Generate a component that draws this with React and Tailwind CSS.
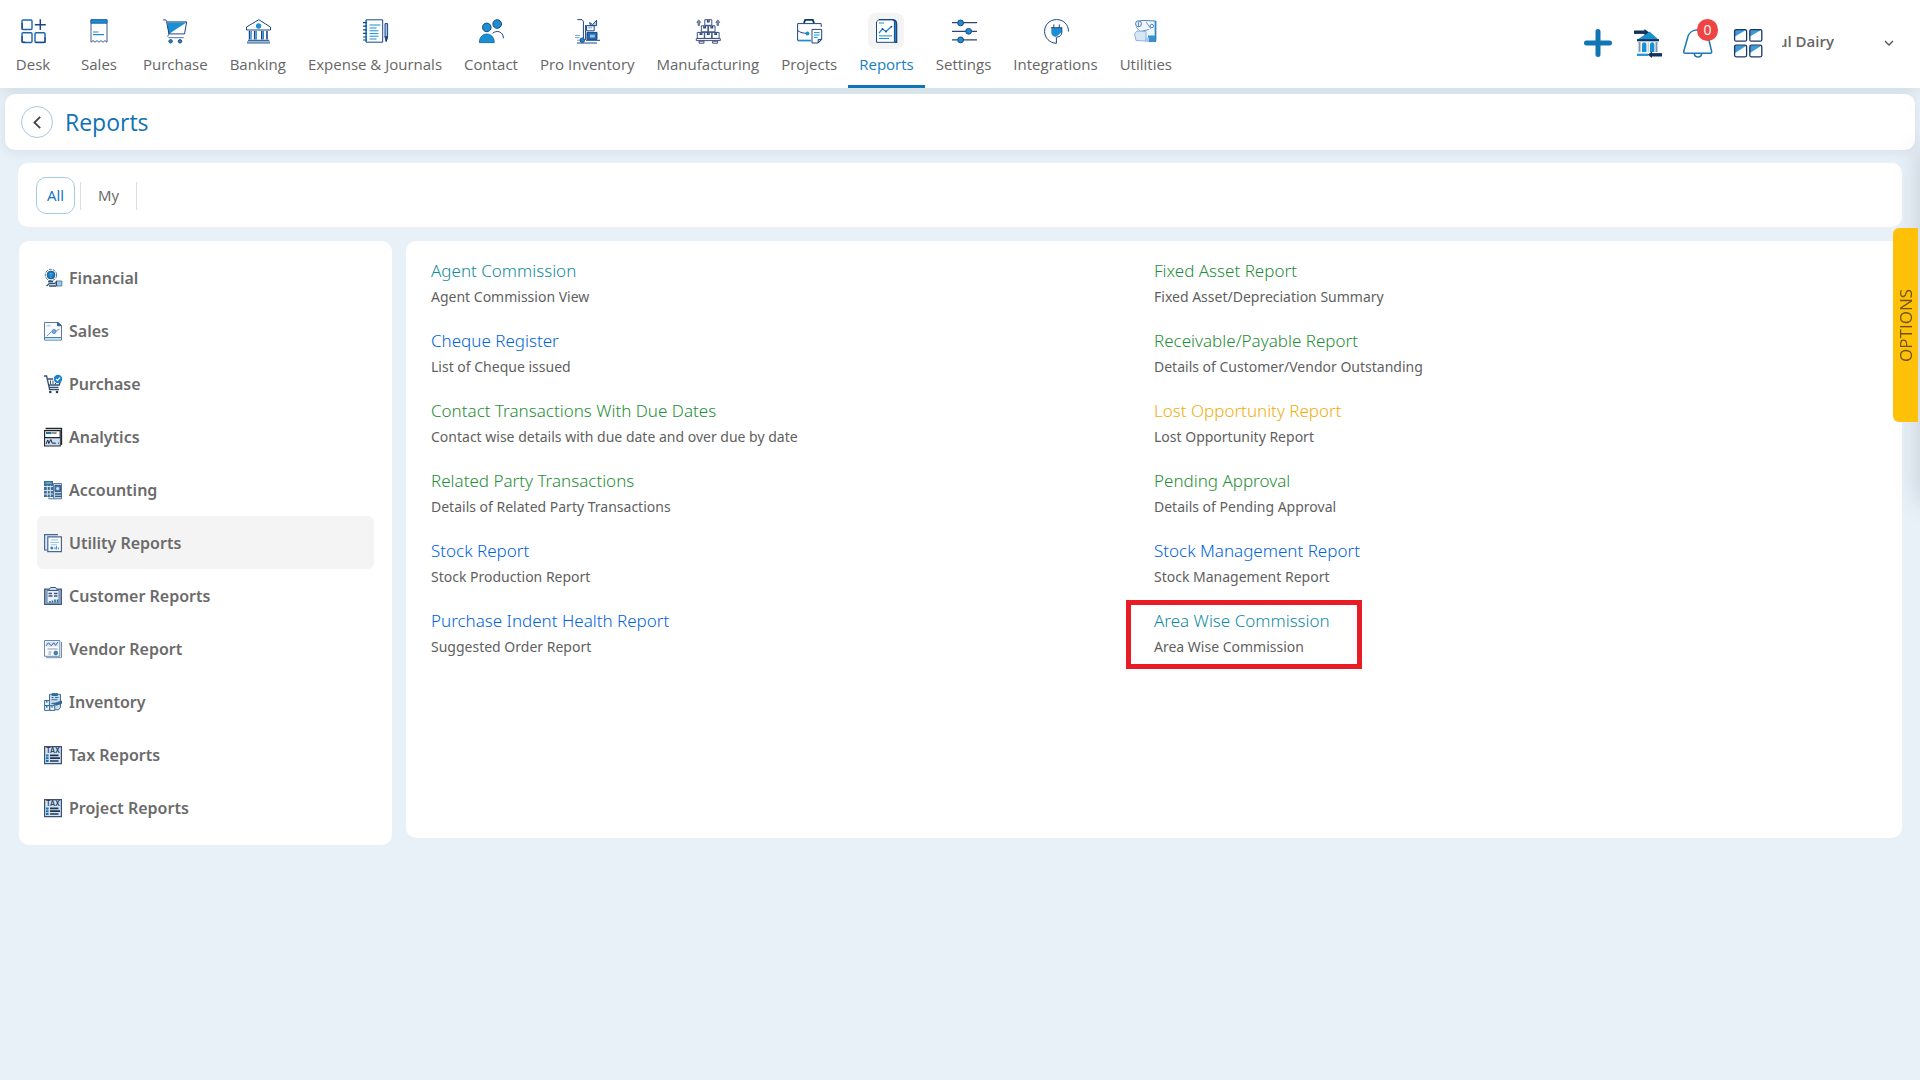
import React from "react";

const NAVY = "#1c4587";
const BLUE = "#1b8fd0";
const SLATE = "#3d5f8c";

/* ---------- top menu icons (24 x 24) ---------- */

const NavSvg = ({ children }) => (
  <svg
    viewBox="0 0 24 24"
    className="w-6 h-6 overflow-visible"
    fill="none"
    stroke={NAVY}
    strokeWidth="1"
    aria-hidden="true"
  >
    {children}
  </svg>
);

const DeskIcon = () => (
  <NavSvg>
    <g stroke="#1d66ad" strokeWidth="1.4">
      <rect x="1" y="1" width="10" height="9.5" rx="1" />
      <rect x="1" y="13.7" width="10" height="9.8" rx="1" />
      <rect x="14" y="13.7" width="10" height="9.8" rx="1" />
    </g>
    <path d="M19.3 .3v10.8M13.8 5.7h11" strokeWidth="1.5" />
    <path d="M1.2 4v6.3M1.2 17v6h3M14.5 23.4H24V18" strokeWidth="1.2" />
  </NavSvg>
);

const SalesIcon = () => (
  <NavSvg>
    <path
      d="M4 .8h16v22.4l-2-1.6-2 1.6-2-1.6-2 1.6-2-1.6-2 1.6-2-1.6-2 1.6Z"
      stroke="#3d5f9c"
    />
    <path d="M4 .8h16v3.4H4Z" fill={BLUE} stroke="#1d66ad" />
    <path d="M6 13h5.5M6 15.6h11" stroke={BLUE} strokeWidth="1.2" />
  </NavSvg>
);

const CartIcon = () => (
  <NavSvg>
    <path d="M4.3 3.6h19.2L12.5 10.5 5.4 15.6Z" fill={BLUE} stroke="none" />
    <path d="M.2.9h2.6l1.2 2h19.7l-2.2 12H6L3.6 3" />
    <path d="M6 15l-1.3 2.3 1.3 1.4h14.8" stroke="#5b6f9f" />
    <circle cx="7.6" cy="22.3" r="1.7" fill={BLUE} />
    <circle cx="17" cy="22.3" r="1.7" fill={BLUE} />
  </NavSvg>
);

const BankIcon = () => (
  <NavSvg>
    <path d="M.5 8 12.8.7 24.5 8v3H.5Z" strokeLinejoin="round" />
    <circle cx="12.6" cy="7" r="2.3" fill={BLUE} stroke={BLUE} />
    <path d="M3.6 12v8.5M8.7 12v8.5M15.8 12v8.5M21 12v8.5" strokeWidth="1.6" />
    <path d="M5.2 12v8.5M10.3 12v8.5M17.4 12v8.5" stroke={BLUE} strokeWidth="1.2" />
    <path d="M2 21.3h21.3M1 23.9h23" stroke={SLATE} strokeWidth="1.3" />
    <path d="M1 22.6h23" stroke="#8dbde4" strokeWidth="1.4" />
  </NavSvg>
);

const JournalIcon = () => (
  <NavSvg>
    <path d="M3 .8h16.7v22.4H3Z" />
    <path d="M3.3 1v22" stroke={BLUE} strokeWidth="1.5" />
    <path d="M0 3.6h4M0 7.2h4M0 10.8h4M0 14.4h4M0 18h4M0 21h4" strokeWidth="1.2" />
    <path d="M6.5 6h11M6.5 9h7M6.5 11.8h9M6.5 14.6h9M6.5 17.2h9M6.5 20h7" stroke={BLUE} />
    <path d="M22 4.6h2.6v13l-1.4 4.6L22 17.6Z" fill="#9cc5e6" />
    <path d="M22 17.6h2.6l-1.4 5Z" fill={NAVY} />
  </NavSvg>
);

const ContactIcon = () => (
  <NavSvg>
    <circle cx="7.8" cy="8.4" r="4.3" fill={BLUE} />
    <circle cx="18.2" cy="5" r="4.3" fill={BLUE} />
    <path d="M.4 23.6c0-11.4 14.8-11.4 14.8 0Z" fill={BLUE} stroke="#1a6fb0" />
    <path d="M13.6 14.4c3.5-3.6 10.8-2.2 10.8 4.9" />
  </NavSvg>
);

const ProInventoryIcon = () => (
  <NavSvg>
    <path d="M2.3.6H7l1.4 1.6V19M11 21.3h14M2 24h20" />
    <path d="M0 16.4h5M0 18.6h4.5M2 21.2h3" stroke="#6fa5d3" />
    <circle cx="7.3" cy="21.2" r="2.2" fill={BLUE} />
    <path d="M12 13.4h10v7H12Z" fill="#1f6fb5" />
    <path d="M11.6 6.6h7.6v5.2h-7.6Z" fill="#fff" />
    <path d="M13.2 7.6h4v2h-4zM15 15.8h4.8v2.6H15Z" fill="#8dc6ea" stroke="none" />
    <path d="M14.6 3.6l3 2 4-4.4v5.4h-6Z" fill="#a9d3ee" />
    <path d="M10.6 6v15" />
  </NavSvg>
);

const ManufacturingIcon = () => (
  <NavSvg>
    <g stroke="#40527d">
      <path d="M8.8.7h7v5.6h-7zM5.3 6.8h6.6v6H5.3zM12.4 6.8H19v6h-6.6zM1.3 13.4h7v6h-7zM8.7 13.4h7v6h-7zM16.1 13.4h7v6h-7z" />
      <path d="M.3 19.6h24v2H.3zM3 22.2h5v2H3zM16.6 22.2h5v2h-5z" />
    </g>
    <path
      d="M11.5 1v1.8h1.6V1M7.8 7v1.8h1.6V7M15 7v1.8h1.6V7M4.2 13.6v1.8h1.6v-1.8M11.5 13.6v1.8h1.6v-1.8M18.9 13.6v1.8h1.6v-1.8"
      strokeWidth="1.2"
    />
    <path
      d="M2.8.8.8 3.4h1.2v3h1.6v-3h1.2ZM21.8.8l-2 2.6H21v3h1.6v-3h1.2Z"
      fill="#8b97b3"
      stroke="#40527d"
      strokeWidth=".7"
    />
  </NavSvg>
);

const ProjectsIcon = () => (
  <NavSvg>
    <path d="M7 4 8.2.9h7.6L17 4" stroke="#123a6e" strokeWidth="1.9" />
    <path d="M24.2 8V4.6H.6v16.8H14M.6 11.6c3 2 6 2.8 9.3 2.8" />
    <path d="M1 21.6h13" stroke={BLUE} strokeWidth="1.6" />
    <circle cx="10.4" cy="14.4" r="2" fill={BLUE} stroke="none" />
    <path d="M15 10.4h9.7v10L21.2 24H15Z" fill="#fff" />
    <path d="M17 13.6h5.6M17 16h5.6M17 18.4h3.6" stroke={BLUE} />
    <path d="M24.6 20.4h-3.4V24Z" fill="#8dbde4" />
  </NavSvg>
);

const ReportsIcon = () => (
  <NavSvg>
    <path d="M5 .8h13c3.400 0 4.600 1.600 4.600 4.400v18h-2" fill={BLUE} strokeWidth="1.4" />
    <path d="M2.5 2.8 4.7.9h13c1.8 0 2.7.8 2.7 3v19.400H2.5Z" fill="#fff" />
    <path d="M5 4h5M5 16.9h13M5 19.5h10" stroke={BLUE} />
    <path d="m5 14 3.5-4 3.5 2.5 5.5-5" stroke="#1d7fc4" strokeWidth="1.2" />
    <circle cx="8.5" cy="10" r=".9" fill={NAVY} stroke="none" />
    <circle cx="12" cy="12.5" r=".9" fill={NAVY} stroke="none" />
    <circle cx="17.5" cy="7.6" r=".9" fill={NAVY} stroke="none" />
  </NavSvg>
);

const SettingsIcon = () => (
  <NavSvg>
    <path d="M0 3.7h25M0 12.3h25M0 20.9h25" stroke="#2e4677" strokeWidth="1.2" />
    <circle cx="8.6" cy="3.9" r="2.9" fill={BLUE} />
    <circle cx="16.6" cy="12.3" r="2.9" fill={BLUE} />
    <circle cx="8.6" cy="20.9" r="2.9" fill={BLUE} />
  </NavSvg>
);

const IntegrationsIcon = () => (
  <NavSvg>
    <path d="M24.5 12.5C24.5 5 19 .6 12.6.6 5.5.6.6 6 .6 12.4S5.5 24 12.4 24.3v-6" />
    <path d="M7.3 9h10.5v4.3l-6 4.7c-2.7-.3-4.5-2-4.5-4.4Z" fill={BLUE} stroke="none" />
    <path d="M9.8 9V5.4M15.3 9V5.4M6.8 8.7h11.4M17.8 9v4.5c0 2.5-2 4.6-5 4.6" />
  </NavSvg>
);

const UtilitiesIcon = () => (
  <NavSvg>
    <g stroke="#5480b4">
      <path d="M3 2.5 9 1.4 21.8 2v19.5H12" fill="#eef5fc" />
      <path d="M21.4 2v21" stroke="#2a8ac8" strokeWidth="1.5" />
      <circle cx="4.5" cy="4.8" r="3" fill="#dcebf8" />
      <path d="M4.5 2.5V8M2 8l4 4.5 9-2M12 3l5 7" strokeWidth=".8" />
      <circle cx="17.8" cy="7" r="1.7" fill="#fff" />
      <path d="M.5 14.5 3 12l9 .5v9.5l-10-.5Z" fill="#d5e6f6" stroke="#8fb3d9" />
      <path d="M14 16.5h7v6.5h-7Z" fill="#3791cd" stroke="none" />
      <path d="M11 18.5h4V23h-4Z" fill="#a8c8e6" stroke="none" />
    </g>
  </NavSvg>
);

const menu = [
  { label: "Desk", Icon: DeskIcon },
  { label: "Sales", Icon: SalesIcon },
  { label: "Purchase", Icon: CartIcon },
  { label: "Banking", Icon: BankIcon },
  { label: "Expense & Journals", Icon: JournalIcon },
  { label: "Contact", Icon: ContactIcon },
  { label: "Pro Inventory", Icon: ProInventoryIcon },
  { label: "Manufacturing", Icon: ManufacturingIcon },
  { label: "Projects", Icon: ProjectsIcon },
  { label: "Reports", Icon: ReportsIcon, active: true },
  { label: "Settings", Icon: SettingsIcon },
  { label: "Integrations", Icon: IntegrationsIcon },
  { label: "Utilities", Icon: UtilitiesIcon },
];

/* ---------- sidebar icons (18 x 18) ---------- */

const SideSvg = ({ children }) => (
  <svg
    viewBox="0 0 18 18"
    className="w-[18px] h-[18px] shrink-0 overflow-visible"
    fill="none"
    stroke={SLATE}
    strokeWidth="1"
    aria-hidden="true"
  >
    {children}
  </svg>
);

const FinancialIcon = () => (
  <SideSvg>
    <circle cx="7" cy="6" r="5.7" stroke="#4b6f96" strokeDasharray="3 1" />
    <circle cx="7" cy="6" r="3.9" fill="#1679bd" stroke="#1d5f98" />
    <path d="M5.6 4.5h2.8M5.6 6h2.8M6 7.5l1.5 1" stroke="#6cc0ee" strokeWidth=".7" />
    <path d="M4 12.5h5M2.5 17l3-2.5h5l2-1.5M5 17h7" stroke="#31506f" strokeWidth="1.3" />
    <path d="M12 12h5.8v5H12Z" fill="#9cc9ea" stroke="#5f7fa5" />
    <path d="M12.5 12v5" stroke="#31506f" />
  </SideSvg>
);

const SalesReportIcon = () => (
  <SideSvg>
    <path d="M.5.5h13.8l3.2 3v14.6H.5Z" fill="#f8fbff" stroke="#5b7ba6" />
    <path d="M13.5.5v3.2h4Z" fill={SLATE} />
    <path d="M2.5 3.8h4" stroke="#7d9cc4" strokeDasharray="1 .6" />
    <path d="m3 14 4.5-4.5 2 1 6-3.5" stroke="#6d9bd0" />
    <circle cx="10" cy="9.5" r="2" fill="#7ba9d8" stroke="#5b8cc4" />
    <path d="M1 15.5h16" stroke="#5b7ba6" />
    <path d="M1 17h16" stroke="#a6dcf5" strokeWidth="1.5" />
  </SideSvg>
);

const PurchaseIcon = () => (
  <SideSvg>
    <path
      d="M0 1h2.6l2.6 11.5h9.3M3.3 4H9M3.9 7l.8 3h10.6l.8-3M5.2 12.5l.3 2.2h9.5"
      stroke="#35506f"
      strokeWidth="1.3"
    />
    <path d="M6.5 5.5v3.5M9 5.5v3.5M11.5 8v1.5" stroke="#35506f" />
    <circle cx="6.3" cy="17" r="1.3" fill="#243d60" stroke="none" />
    <circle cx="13" cy="17" r="1.3" fill="#243d60" stroke="none" />
    <circle cx="14" cy="4" r="4.2" fill="#1583cb" stroke="none" />
    <path d="m12 4 1.5 1.5 2.7-3" stroke="#fff" strokeWidth="1.2" />
  </SideSvg>
);

const AnalyticsIcon = () => (
  <SideSvg>
    <path d="M1.5.5h16v16.5" stroke="#23262e" strokeWidth="1.3" />
    <path d="M.6 2.6h15.6v15.3H.6Z" fill="#fff" stroke="#23262e" strokeWidth="1.2" />
    <path d="M1.2 10h14.5v7.3H1.2Z" fill="#c9dcf8" stroke="none" />
    <path d="M2 5h5.5" stroke="#1d6f96" strokeWidth="2" />
    <path d="M8 5h4.5M1 9.7h15" stroke="#23262e" strokeWidth="1.2" />
    <path d="m2 16 1.8-4 1 3.5 2-4 1.5 3.7h3.5M14 15.2h1" stroke="#23262e" />
  </SideSvg>
);

const AccountingIcon = () => (
  <SideSvg>
    <path d="M0 0h9v16H0Z" fill="#3d6d92" stroke="none" />
    <path d="M1.5 2h6" stroke="#67b4dc" strokeWidth="1.5" />
    <path d="M0 5.5h9M0 9.5h9M0 13h9M3.3 4.5v11M6.3 4.5v11" stroke="#e6f0fa" strokeWidth=".9" />
    <path d="M4.8 16.5v1.3h12.7V2.5H9.5v15" fill="#bdd5ee" stroke="#5b7ba0" />
    <path d="M11 4.5h5.5v6H11Z" fill="#4f81ae" stroke="#35597c" />
    <circle cx="13.7" cy="7.4" r="1.5" fill="#cfe3f7" stroke="none" />
    <path d="M11 13h6.5M11 15.4h6.5" stroke="#35597c" strokeWidth="1.3" />
  </SideSvg>
);

const UtilityIcon = () => (
  <SideSvg>
    <path d="M14 .6H.6v15.4h3" fill="#dceafa" stroke="#4a6591" strokeWidth="1.2" />
    <path d="M3.8 2.9h13.6v14.7H3.8Z" fill="#fff" stroke="#4a6591" strokeWidth="1.2" />
    <path d="M7 6h7M6 8.4h9M7 10.8h6" stroke="#8cc3e6" />
    <circle cx="7.8" cy="14" r="1.5" fill={BLUE} stroke="none" />
    <path d="M11 15.5v-2.5M12.6 15.5v-3.5M14.4 15.5v-2" stroke="#4a86c0" />
  </SideSvg>
);

const CustomerIcon = () => (
  <SideSvg>
    <path d="M.7 2.2h16.6v15.2H.7Z" fill="#a9bfdc" stroke="#3c5680" strokeWidth="1.3" />
    <path d="M3 3.5h12v12.5H3Z" fill="#e8f1fb" stroke="#5b7ba0" />
    <path d="M5 2.5 6.5.5h5L13 2.5v1H5Z" fill="#cfdcee" stroke="#3c5680" />
    <path d="M4.5 6.5H8M10 6.5h3.5M4.5 9h4M10 9h3.5" stroke="#3c5680" strokeWidth="1.3" />
    <path d="M6 15.5v-1.5M8.5 15.5v-2M11 15.5v-3M13.5 15.5v-3" stroke="#26648f" strokeWidth="1.5" />
  </SideSvg>
);

const VendorIcon = () => (
  <SideSvg>
    <path d="M17.5 2v15.7H2" stroke="#7290a8" />
    <path d="M.5.5h15.3v15.8H.5Z" fill="#fbfdff" stroke="#6d8aae" />
    <path d="M1.8 1.5h12.4v5H1.8Z" fill="#d3e2fa" stroke="none" />
    <path d="m2 5.8 2.5-3 2.7 3 2.5-3 1.8 2.5 2.7-3.5" stroke="#4a6591" />
    <path d="M3.5 9h10M4.5 12h3M4.5 14h2.5" stroke="#8c99a8" />
    <circle cx="11.8" cy="13" r="2" fill="#2a84bd" stroke="#4a6591" strokeWidth=".6" />
  </SideSvg>
);

const InventoryIcon = () => (
  <SideSvg>
    <path d="M5.5 1.3h11v13l-2 2.5H5.5Z" fill="#c8daee" stroke="#4a6e96" />
    <path d="M8 .7h5.5v1.8H8Z" fill="#2a6c98" stroke="#2a6c98" />
    <path d="M7.5 4.5h2M11 4.5h3.5M7.5 6.7h6" stroke="#3c6a92" />
    <path d="M.6 7.5h4.8v5H.6zM.6 12.6h5v4.8H.6zM5.7 12.6h5v4.8h-5z" fill="#f0f6fd" stroke="#3c6a92" />
    <path d="M2 8h1.5v1.7H2zM2 13h1.5v1.7H2zM7.3 13h1.5v1.7H7.3z" fill="#2a84bd" stroke="none" />
    <path d="m7.5 10.5 4.5-.5 5.5-2v2.5l-6 1.8" fill="#2d6a94" stroke="#2d6a94" />
  </SideSvg>
);

const TaxIcon = () => (
  <SideSvg>
    <path d="M.6.6h16.8v17H.6Z" fill="#d2e4f8" stroke="#3a4f73" strokeWidth="1.2" />
    <text
      x="9"
      y="6.6"
      textAnchor="middle"
      fill="#26364f"
      stroke="none"
      fontFamily="Inter, sans-serif"
      fontSize="7"
      fontWeight="600"
    >
      TAX
    </text>
    <path d="M2 9.4h2.6M2 12.2h2.6M2 15h2.6" stroke="#1f6f9f" strokeWidth="2" />
    <path d="M6 9.4h8.5M6 12.2h10M6 15h8.5" stroke="#24344f" strokeWidth="1.7" />
  </SideSvg>
);

const categories = [
  { label: "Financial", Icon: FinancialIcon },
  { label: "Sales", Icon: SalesReportIcon },
  { label: "Purchase", Icon: PurchaseIcon },
  { label: "Analytics", Icon: AnalyticsIcon },
  { label: "Accounting", Icon: AccountingIcon },
  { label: "Utility Reports", Icon: UtilityIcon, active: true },
  { label: "Customer Reports", Icon: CustomerIcon },
  { label: "Vendor Report", Icon: VendorIcon },
  { label: "Inventory", Icon: InventoryIcon },
  { label: "Tax Reports", Icon: TaxIcon },
  { label: "Project Reports", Icon: TaxIcon },
];

const TEAL = "text-[#0f8ba1]";
const GREEN = "text-[#1f8e38]";
const LINK = "text-[#0064dc]";
const AMBER = "text-[#f0ae0c]";

const reports = [
  { title: "Agent Commission", text: "Agent Commission View", color: TEAL },
  { title: "Fixed Asset Report", text: "Fixed Asset/Depreciation Summary", color: GREEN },
  { title: "Cheque Register", text: "List of Cheque issued", color: LINK },
  { title: "Receivable/Payable Report", text: "Details of Customer/Vendor Outstanding", color: GREEN },
  { title: "Contact Transactions With Due Dates", text: "Contact wise details with due date and over due by date", color: GREEN },
  { title: "Lost Opportunity Report", text: "Lost Opportunity Report", color: AMBER },
  { title: "Related Party Transactions", text: "Details of Related Party Transactions", color: GREEN },
  { title: "Pending Approval", text: "Details of Pending Approval", color: GREEN },
  { title: "Stock Report", text: "Stock Production Report", color: LINK },
  { title: "Stock Management Report", text: "Stock Management Report", color: LINK },
  { title: "Purchase Indent Health Report", text: "Suggested Order Report", color: LINK },
  { title: "Area Wise Commission", text: "Area Wise Commission", color: TEAL, marked: true },
];

const Header = () => (
  <header className="flex items-start justify-between h-22 bg-white shadow-[0_0_14px_rgba(60,80,60,0.16)]">
    <nav className="flex">
      {menu.map(({ label, Icon, active }) => (
        <a
          key={label}
          href="#"
          className={`flex flex-col items-center h-22 min-w-[66px] px-[11px] pt-[13px] border-b-3 whitespace-nowrap ${
            active ? "border-[#0f75b5] text-[#1480c4]" : "border-transparent text-[#666]"
          }`}
        >
          <span
            className={`flex items-center justify-center w-9 h-9 rounded-lg ${active ? "bg-[#f4f4f4]" : ""}`}
          >
            <Icon />
          </span>
          <span className="mt-[5px] text-[15px] leading-5">{label}</span>
        </a>
      ))}
    </nav>

    <div className="flex items-center gap-[22px] pt-[29px] pr-[26px]">
      <button type="button" aria-label="Add" className="cursor-pointer">
        <svg viewBox="0 0 28 28" className="w-7 h-7" stroke="#0f75b5" strokeWidth="5" strokeLinecap="round">
          <path d="M14 2.5v23M2.5 14h23" />
        </svg>
      </button>

      <button type="button" aria-label="Bank transfer" className="cursor-pointer">
        <svg viewBox="0 0 28 28" className="w-7 h-7 overflow-visible" fill="none">
          <path d="M3.5 10.5 15.5 2.5l9 8Z" fill={BLUE} />
          <path d="M3 11.2h22" stroke="#10325f" strokeWidth="2.2" />
          <path d="M0 3.2h11" stroke="#10325f" strokeWidth="3.4" />
          <path d="m10.5 0 4.3 3.2-4.3 3.2Z" fill="#10325f" />
          <path d="M5.5 13v10M22.5 13v10" stroke="#7d9bbd" strokeWidth="2" />
          <path
            d="M8 23v-7.5a2.2 2.2 0 0 1 4.4 0V23ZM16 23v-7.5a2.2 2.2 0 0 1 4.4 0V23Z"
            fill={BLUE}
          />
          <path d="M14.2 13v10" stroke="#a9c8e4" strokeWidth="1.2" />
          <path d="M3 25.8h11" stroke="#2a9bd8" strokeWidth="2.4" />
          <path d="M17 25.8h11" stroke="#10325f" strokeWidth="3.4" />
          <path d="m18 22.6-4.3 3.2L18 29Z" fill="#10325f" />
        </svg>
      </button>

      <button type="button" aria-label="Notifications" className="relative cursor-pointer">
        <svg viewBox="0 0 28 28" className="w-7 h-7 overflow-visible" fill="none" stroke="#1a78b8" strokeWidth="1.5">
          <path d="M14 .8C8 .8 4.2 4.5 3.4 9.5L-.2 22.3c-.3 1.2.2 1.9 1.4 1.9h25c1.2 0 1.7-.7 1.4-1.9L24.6 9.5C23.8 4.5 20 .8 14 .8Z" />
          <path d="M10.3 24.4c.3 4.8 7.1 4.8 7.4 0" />
        </svg>
        <span className="absolute -top-[10px] -right-[6px] flex items-center justify-center w-[21px] h-[22px] rounded-full bg-[#ee4444] text-white text-[14px] leading-none">
          0
        </span>
      </button>

      <button type="button" aria-label="Apps" className="cursor-pointer">
        <svg viewBox="0 0 28 28" className="w-7 h-7 overflow-visible" stroke="#173869" strokeWidth="1.3" fill="none">
          <path d="M1 1h11L1 7.5ZM16 1h11l-11 6.5ZM1 17h11L1 24ZM16 17h11l-11 7Z" fill="#3e9ad6" stroke="none" />
          <rect x=".6" y=".6" width="12" height="11.6" rx="1.5" />
          <rect x="15.8" y=".6" width="12" height="11.6" rx="1.5" />
          <rect x=".6" y="16.2" width="12" height="11.6" rx="1.5" />
          <rect x="15.8" y="16.2" width="12" height="11.6" rx="1.5" />
        </svg>
      </button>

      <button type="button" className="flex items-center justify-between w-[112px] -ml-0.5 cursor-pointer">
        <span className="flex justify-end w-[52px] pb-1 overflow-hidden whitespace-nowrap text-[15px] leading-5 font-semibold text-[#666]">
          ul Dairy
        </span>
        <svg viewBox="0 0 10 6" className="w-[10px] h-[6px]" fill="none" stroke="#555" strokeWidth="1.3">
          <path d="m1 1 4 4 4-4" />
        </svg>
      </button>
    </div>
  </header>
);

const TitleBar = () => (
  <div className="flex items-center gap-3 h-14 mt-1.5 mx-[5px] pl-4 rounded-[10px] bg-white shadow-[0_2px_12px_rgba(60,80,90,0.1)]">
    <button
      type="button"
      aria-label="Back"
      className="flex items-center justify-center w-8 h-8 rounded-full border border-[#a9c8e0] cursor-pointer"
    >
      <svg viewBox="0 0 8 13" className="w-2 h-[13px]" fill="none" stroke="#444" strokeWidth="1.8">
        <path d="M7.2.8 1.4 6.5l5.8 5.7" />
      </svg>
    </button>
    <h1 className="text-[23px] leading-8 font-medium text-[#0f72b5]">Reports</h1>
  </div>
);

const Tabs = () => (
  <div className="flex items-center h-16 mt-[13px] mx-[18px] pl-[18px] pt-px rounded-[10px] bg-white text-[15px]">
    <button
      type="button"
      className="w-[39px] h-[37px] rounded-[10px] border border-[#a9cbe0] text-[#0f72b5] cursor-pointer"
    >
      All
    </button>
    <div className="flex items-center h-7 ml-[5px] px-[17px] border-x border-[#ddd] text-[#666]">
      <button type="button" className="cursor-pointer">
        My
      </button>
    </div>
  </div>
);

const Sidebar = () => (
  <aside className="w-[373px] shrink-0 px-[18px] pt-[10px] pb-[11px] rounded-[10px] bg-white">
    <ul>
      {categories.map(({ label, Icon, active }) => (
        <li key={label}>
          <a
            href="#"
            className={`flex items-center gap-[7px] h-[53px] pl-[7px] rounded-md font-['Noto_Sans',sans-serif] text-base font-semibold text-[#6b6b6b] ${
              active ? "bg-[#f4f4f4]" : ""
            }`}
          >
            <Icon />
            {label}
          </a>
        </li>
      ))}
    </ul>
  </aside>
);

const ReportList = () => (
  <main className="grow min-h-[597px] px-[25px] pt-[18px] rounded-[10px] bg-white font-['Noto_Sans',sans-serif]">
    <div className="grid grid-cols-2 gap-y-[22px]">
      {reports.map(({ title, text, color, marked }) => (
        <div key={title} className="relative">
          <a href="#" className={`block w-fit text-[17px] leading-6 font-light ${color}`}>
            {title}
          </a>
          <p className="mt-1 text-[14px] leading-5 text-[#5f5f5f]">{text}</p>
          {marked && (
            <span className="absolute -top-[9px] -bottom-3 -left-7 w-[236px] border-5 border-[#e81c24] pointer-events-none" />
          )}
        </div>
      ))}
    </div>
  </main>
);

export default function App() {
  return (
    <div className="min-h-screen bg-[#e8f0f8] font-['Open_Sans',sans-serif]">
      <Header />
      <TitleBar />
      <Tabs />
      <div className="flex items-start gap-[14px] mt-[14px] ml-[19px] mr-[18px] pb-8">
        <Sidebar />
        <ReportList />
      </div>

      {/* collapsed options drawer, only its shadow and tab are visible */}
      <div className="fixed left-full top-[150px] w-72 h-[350px] shadow-[0_0_24px_rgba(60,70,80,0.22)]" />
      <button
        type="button"
        className="fixed right-[2px] top-[228px] flex items-center justify-center w-[25px] h-[194px] rounded-l-md bg-[#ffc107] text-[17px] leading-6 text-[#6b5510] cursor-pointer [writing-mode:vertical-rl]"
      >
        <span className="rotate-180">OPTIONS</span>
      </button>
    </div>
  );
}
